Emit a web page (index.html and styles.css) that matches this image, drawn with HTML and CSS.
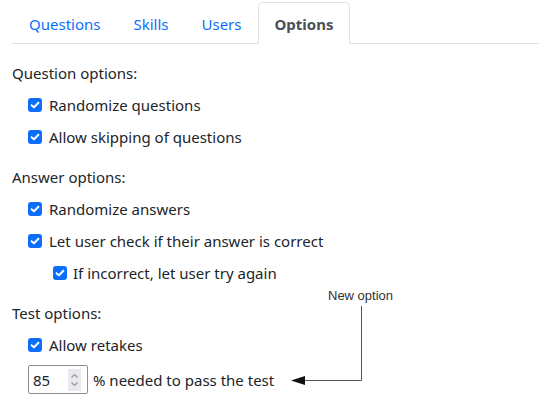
FILE: index.html
```html
<!DOCTYPE html>
<html lang="en">
<head>
  <meta charset="UTF-8" />
  <title>Test settings</title>
  <link rel="stylesheet" href="styles.css">
</head>
<body>
  <ul class="tabs">
    <li><a href="#">Questions</a></li>
    <li><a href="#">Skills</a></li>
    <li><a href="#">Users</a></li>
    <li><a href="#" class="active">Options</a></li>
  </ul>

  <div class="options">
    <div class="group-title">Question options:</div>
    <div class="check"><span class="box"><svg viewBox="0 0 14 14"><path d="M3.6 7.2l2.3 2.2 4.5-4.6" /></svg></span>Randomize questions</div>
    <div class="check"><span class="box"><svg viewBox="0 0 14 14"><path d="M3.6 7.2l2.3 2.2 4.5-4.6" /></svg></span>Allow skipping of questions</div>

    <div class="group-title">Answer options:</div>
    <div class="check"><span class="box"><svg viewBox="0 0 14 14"><path d="M3.6 7.2l2.3 2.2 4.5-4.6" /></svg></span>Randomize answers</div>
    <div class="check"><span class="box"><svg viewBox="0 0 14 14"><path d="M3.6 7.2l2.3 2.2 4.5-4.6" /></svg></span>Let user check if their answer is correct</div>
    <div class="check sub"><span class="box"><svg viewBox="0 0 14 14"><path d="M3.6 7.2l2.3 2.2 4.5-4.6" /></svg></span>If incorrect, let user try again</div>

    <div class="group-title">Test options:</div>
    <div class="check"><span class="box"><svg viewBox="0 0 14 14"><path d="M3.6 7.2l2.3 2.2 4.5-4.6" /></svg></span>Allow retakes</div>
    <div class="pass-row">
      <div class="num-input">
        <span>85</span>
        <svg class="spin" viewBox="0 0 13 22"><path d="M3.5 8.5l3-3 3 3M3.5 13.5l3 3 3-3" /></svg>
      </div>
      % needed to pass the test
    </div>
  </div>

  <div class="note">
    <span class="note-text">New option</span>
    <svg class="note-arrow" width="80" height="86" viewBox="0 0 80 86">
      <path d="M71.5 0v74.5H14" />
      <polygon points="1,74.5 15,70 15,79" />
    </svg>
  </div>
</body>
</html>
```

FILE: styles.css
```css
body {
  margin: 2px 0 0 12px;
  font-family: "Noto Sans", "Open Sans", sans-serif;
  font-size: 15px;
  color: #212529;
  background: #fff;
}

.tabs {
  display: flex;
  list-style: none;
  margin: 0;
  padding: 0;
  border-bottom: 1px solid #dee2e6;
}

.tabs a {
  display: block;
  padding: 11px 15px 8px 16px;
  line-height: 21px;
  color: #0d6efd;
  text-decoration: none;
  border: 1px solid transparent;
  border-radius: 5px 5px 0 0;
  margin-bottom: -1px;
}

.tabs a.active {
  color: #495057;
  font-weight: bold;
  background: #fff;
  border-color: #dee2e6 #dee2e6 #fff;
}

.options {
  padding-top: 18px;
}

.group-title {
  line-height: 22px;
  margin-bottom: 10px;
}

.check {
  display: flex;
  align-items: center;
  gap: 7px;
  margin-left: 16px;
  line-height: 22px;
  margin-bottom: 10px;
}

.group-title + .check {
  margin-top: 1px;
}

.check + .group-title {
  margin-top: 18px;
}

.check.sub {
  margin-left: 41px;
  gap: 6px;
}

.box {
  width: 14px;
  height: 14px;
  border-radius: 3px;
  background: #0d6efd;
  display: flex;
}

.box svg {
  width: 14px;
  height: 14px;
}

.box path {
  fill: none;
  stroke: #fff;
  stroke-width: 2;
  stroke-linecap: round;
  stroke-linejoin: round;
}

.pass-row {
  display: flex;
  align-items: center;
  gap: 5px;
  margin-left: 16px;
  margin-top: -1px;
}

.num-input {
  height: 27px;
  width: 48px;
  border: 1px solid #8f8f8f;
  border-radius: 2px;
  display: flex;
  align-items: center;
  justify-content: space-between;
  padding: 0 6px 0 4px;
}

.spin {
  width: 13px;
  height: 22px;
  background: #e9e9ed;
}

.spin path {
  fill: none;
  stroke: #999;
  stroke-width: 1.2;
}

.note {
  position: absolute;
  left: 290px;
  top: 288px;
}

.note-text {
  position: absolute;
  left: 38px;
  top: 0;
  font-family: "Liberation Sans", Arial, sans-serif;
  font-size: 13px;
  color: #333;
  white-space: nowrap;
}

.note-arrow {
  position: absolute;
  left: 0;
  top: 18px;
}

.note-arrow path {
  fill: none;
  stroke: #555;
  stroke-width: 1;
}

.note-arrow polygon {
  fill: #111;
}
```
